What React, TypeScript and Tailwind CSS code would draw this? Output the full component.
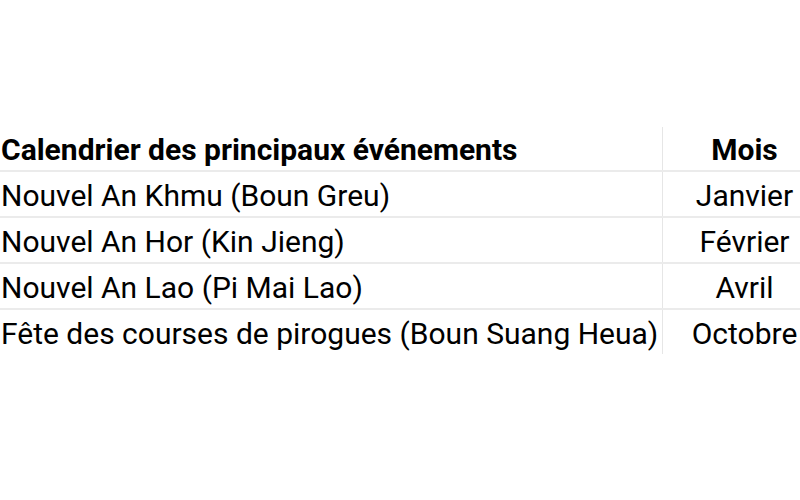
const rows: [string, string][] = [
  ["Nouvel An Khmu (Boun Greu)", "Janvier"],
  ["Nouvel An Hor (Kin Jieng)", "Février"],
  ["Nouvel An Lao (Pi Mai Lao)", "Avril"],
  ["Fête des courses de pirogues (Boun Suang Heua)", "Octobre"],
];

export default function App() {
  return (
    <div
      className="w-[800px] h-[500px] bg-white overflow-hidden text-black"
      style={{ fontFamily: "Roboto, 'Liberation Sans', sans-serif" }}
    >
      <div className="pt-[127px] w-[826px]">
        <div className="flex h-[45px] border-b-2 border-[#ebebeb]">
          <div className="w-[663px] shrink-0 border-r border-[#e6e6e6] flex items-center pl-[1px] pt-[2px] text-[30px] font-bold leading-none">
            Calendrier des principaux événements
          </div>
          <div className="flex-1 flex items-center justify-center pt-[2px] text-[30px] font-bold leading-none">
            Mois
          </div>
        </div>
        {rows.map(([a, b], i) => (
          <div
            key={a}
            className={
              i < rows.length - 1
                ? "flex h-[46px] border-b-2 border-[#ebebeb]"
                : "flex h-[44px]"
            }
          >
            <div className="w-[663px] shrink-0 border-r border-[#e6e6e6] flex items-center pl-[1px] pt-[3px] text-[30px] leading-none">
              {a}
            </div>
            <div className="flex-1 flex items-center justify-center pt-[3px] text-[30px] leading-none">
              {b}
            </div>
          </div>
        ))}
      </div>
    </div>
  );
}
